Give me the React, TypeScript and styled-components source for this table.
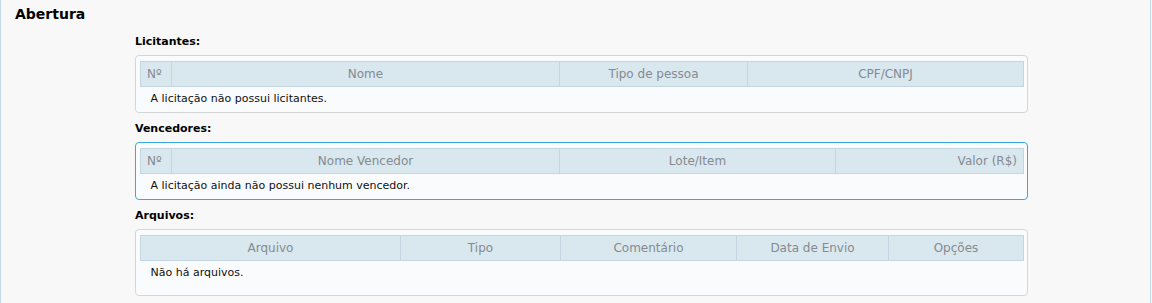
import React from 'react'
import styled, { createGlobalStyle } from 'styled-components'

const GlobalStyle = createGlobalStyle`
  html, body {
    margin: 0;
    padding: 0;
    background: #f8f8f8;
  }
  body {
    font-family: "DejaVu Sans", Verdana, sans-serif;
    color: #000;
  }
`

const Page = styled.div`
  box-sizing: border-box;
  width: 1151px;
  min-height: 303px;
  border-left: 1px solid #c6d9e8;
  border-right: 1px solid #c6d9e8;
  background: #f8f8f8;
  padding-bottom: 8px;
`

const Title = styled.h2`
  margin: 0;
  padding: 5px 0 0 14px;
  font-size: 14px;
  line-height: 18px;
  font-weight: bold;
`

const Sections = styled.div`
  display: flex;
  flex-direction: column;
  gap: 9px;
  padding: 12px 0 0 134px;
`

const Section = styled.section`
  display: flex;
  flex-direction: column;
`

const SectionLabel = styled.h3`
  margin: 0 0 6px;
  font-size: 11px;
  line-height: 14px;
  font-weight: bold;
`

const Panel = styled.div<{ $active?: boolean; $tall?: boolean }>`
  box-sizing: border-box;
  width: 893px;
  padding: 5px 4px ${(p) => (p.$tall ? '12px' : '3px')};
  background: #fafbfd;
  border: 1px solid ${(p) => (p.$active ? '#3aa8dc' : '#d4d6d8')};
  border-radius: 4px;
`

const Table = styled.table`
  width: 883px;
  table-layout: fixed;
  border-collapse: collapse;
  font-size: 12px;
`

const HeadCell = styled.th<{ $align?: 'left' | 'center' | 'right' }>`
  height: 24px;
  padding: 0 6px;
  background: #d9e7ef;
  border: 1px solid #c4d6e2;
  color: #858b90;
  font-weight: normal;
  text-align: ${(p) => p.$align || 'center'};
  white-space: nowrap;
`

const EmptyCell = styled.td`
  height: 22px;
  padding: 0 10px;
  font-size: 11px;
  color: #111;
`

type Column = { label: string; width: number; align?: 'left' | 'center' | 'right' }

function ListTable({ columns, empty }: { columns: Column[]; empty: string }) {
  return (
    <Table>
      <colgroup>
        {columns.map((c) => (
          <col key={c.label} style={{ width: c.width }} />
        ))}
      </colgroup>
      <thead>
        <tr>
          {columns.map((c) => (
            <HeadCell key={c.label} $align={c.align}>
              {c.label}
            </HeadCell>
          ))}
        </tr>
      </thead>
      <tbody>
        <tr>
          <EmptyCell colSpan={columns.length}>{empty}</EmptyCell>
        </tr>
      </tbody>
    </Table>
  )
}

const licitantes: Column[] = [
  { label: 'Nº', width: 31, align: 'left' },
  { label: 'Nome', width: 388 },
  { label: 'Tipo de pessoa', width: 188 },
  { label: 'CPF/CNPJ', width: 276 },
]

const vencedores: Column[] = [
  { label: 'Nº', width: 31, align: 'left' },
  { label: 'Nome Vencedor', width: 388 },
  { label: 'Lote/Item', width: 276 },
  { label: 'Valor (R$)', width: 188, align: 'right' },
]

const arquivos: Column[] = [
  { label: 'Arquivo', width: 260 },
  { label: 'Tipo', width: 160 },
  { label: 'Comentário', width: 176 },
  { label: 'Data de Envio', width: 152 },
  { label: 'Opções', width: 135 },
]

export default function App() {
  return (
    <>
      <GlobalStyle />
      <Page>
        <Title>Abertura</Title>
        <Sections>
          <Section>
            <SectionLabel>Licitantes:</SectionLabel>
            <Panel>
              <ListTable columns={licitantes} empty="A licitação não possui licitantes." />
            </Panel>
          </Section>
          <Section>
            <SectionLabel>Vencedores:</SectionLabel>
            <Panel $active>
              <ListTable columns={vencedores} empty="A licitação ainda não possui nenhum vencedor." />
            </Panel>
          </Section>
          <Section>
            <SectionLabel>Arquivos:</SectionLabel>
            <Panel $tall>
              <ListTable columns={arquivos} empty="Não há arquivos." />
            </Panel>
          </Section>
        </Sections>
      </Page>
    </>
  )
}
